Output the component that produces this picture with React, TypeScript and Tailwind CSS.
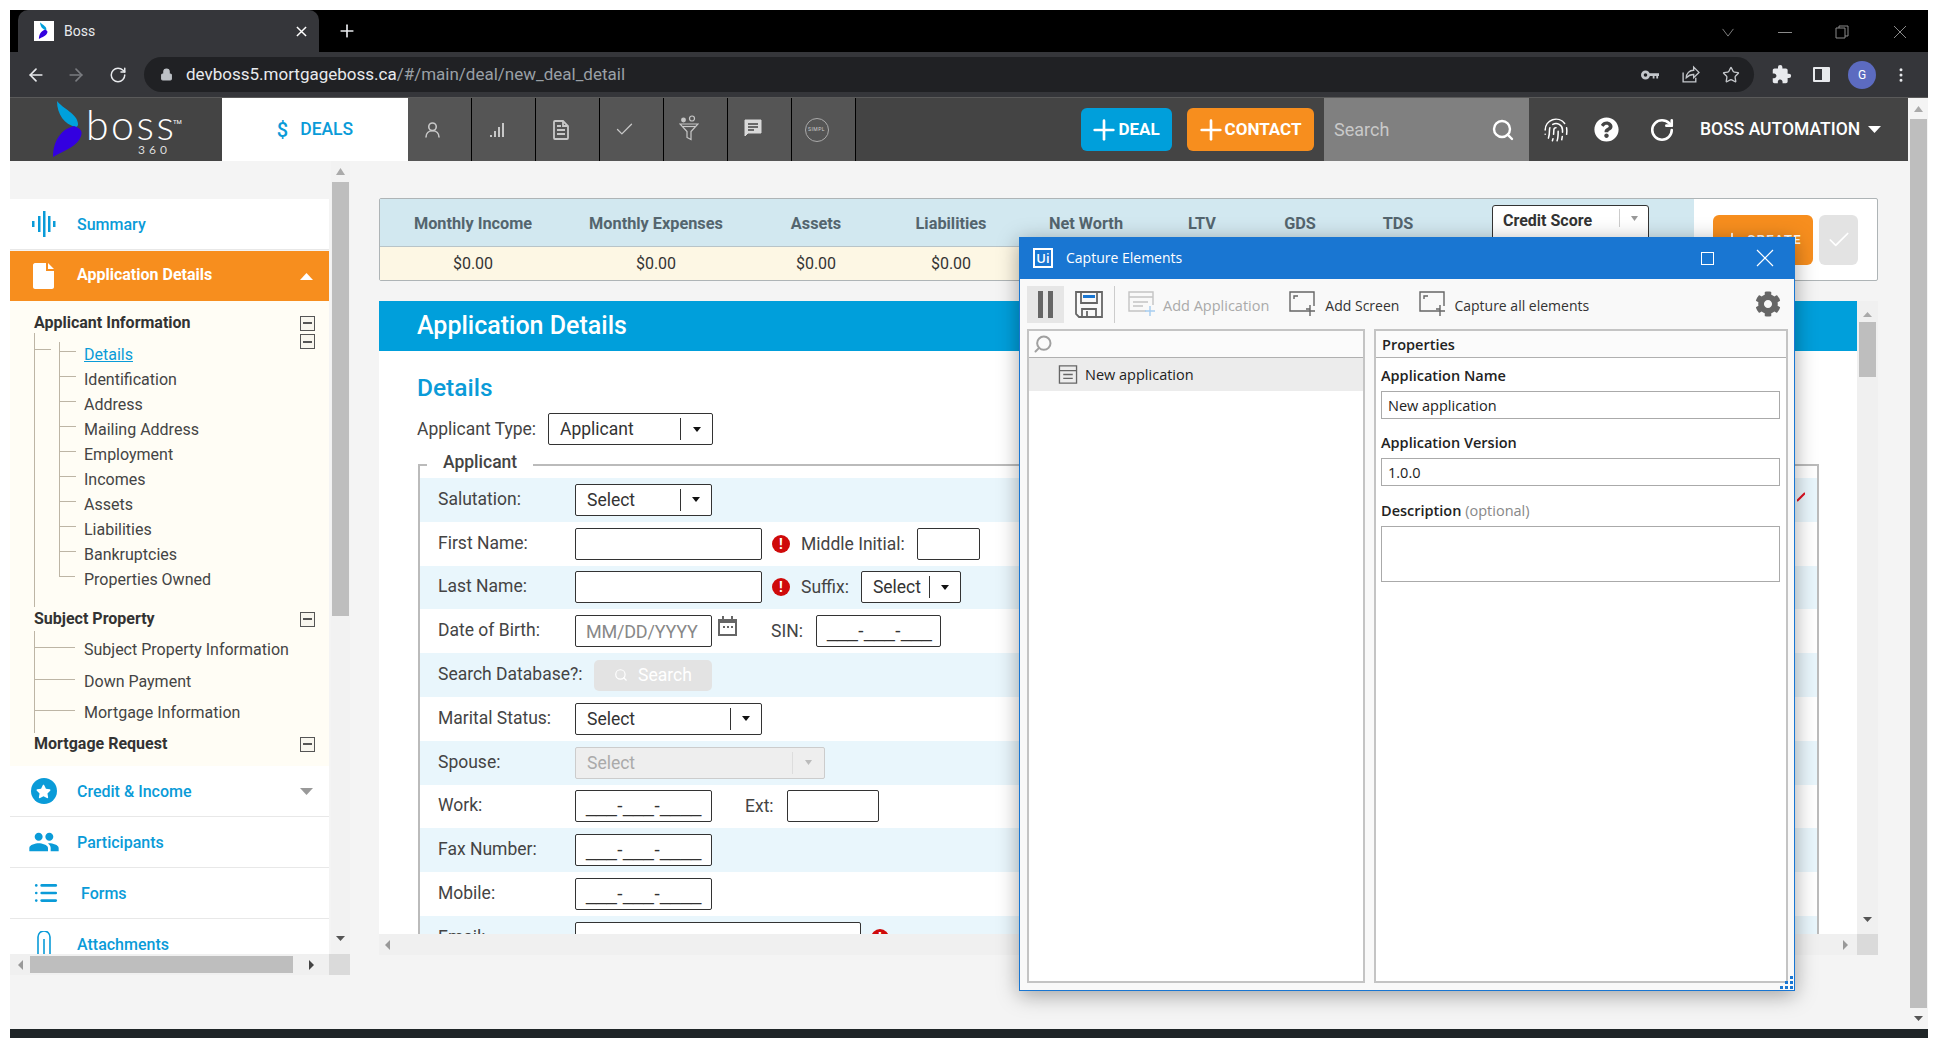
import {
  ArrowLeft,
  ArrowRight,
  Check,
  EllipsisVertical,
  Fingerprint,
  List,
  Lock,
  Plus,
  RotateCw,
  Search,
  Star,
} from 'lucide-react';
import { FaCog, FaQuestionCircle, FaStar } from 'react-icons/fa';
import { MdExtension, MdPeople } from 'react-icons/md';
import type { ReactNode } from 'react';

const STATS = [
  { label: 'Monthly Income', w: 'w-[186px]' },
  { label: 'Monthly Expenses', w: 'w-[180px]' },
  { label: 'Assets', w: 'w-[140px]' },
  { label: 'Liabilities', w: 'w-[130px]' },
  { label: 'Net Worth', w: 'w-[140px]' },
  { label: 'LTV', w: 'w-[92px]' },
  { label: 'GDS', w: 'w-[104px]' },
  { label: 'TDS', w: 'w-[92px]' },
];

const APPLICANT_ITEMS = [
  'Details',
  'Identification',
  'Address',
  'Mailing Address',
  'Employment',
  'Incomes',
  'Assets',
  'Liabilities',
  'Bankruptcies',
  'Properties Owned',
];

const Tri = ({ dir, className }: { dir: 'up' | 'down' | 'left' | 'right'; className: string }) => {
  const points = {
    up: '0,10 5,0 10,10',
    down: '0,0 10,0 5,10',
    left: '10,0 10,10 0,5',
    right: '0,0 0,10 10,5',
  }[dir];
  return (
    <svg viewBox="0 0 10 10" preserveAspectRatio="none" className={className}>
      <polygon points={points} fill="currentColor" />
    </svg>
  );
};

const Logo = () => (
  <div className="relative h-[63px] w-[212px] shrink-0">
    <svg viewBox="0 0 40 60" className="absolute left-[40px] top-[2px] h-[60px] w-[40px]">
      <path d="M7 1C12 8 28 14 28 24C28 27 26 27 25 27C15 24 7 15 7 1Z" fill="#00a0dc" />
      <path d="M24 26C30 28 33 31 31 36C28 46 15 50 3 57C3 45 8 30 24 26Z" fill="#3300e0" />
    </svg>
    <span className="absolute left-[76px] top-[8px] font-['Lato',sans-serif] text-[41px] font-light leading-[38px] tracking-[2.5px] text-white">
      boss
    </span>
    <span className="absolute left-[163px] top-[21px] text-[6px] leading-none text-white">TM</span>
    <span className="absolute left-[128px] top-[46px] font-['Lato',sans-serif] text-[12px] leading-none tracking-[4px] text-[#ddd]">
      360
    </span>
  </div>
);

const BrowserChrome = () => (
  <div className="flex flex-col font-['Roboto',sans-serif]">
    <div className="relative flex h-[42px] items-end bg-black pl-[8px]">
      <div className="flex h-[42px] w-[301px] items-center rounded-t-[10px] bg-[#35363a] pl-[16px] pr-[12px]">
        <div className="flex h-[20px] w-[20px] items-center justify-center bg-white">
          <svg viewBox="0 0 40 60" className="h-[18px] w-[12px]">
            <path d="M7 1C12 8 28 14 28 24C28 27 26 27 25 27C15 24 7 15 7 1Z" fill="#00a0dc" />
            <path d="M24 26C30 28 33 31 31 36C28 46 15 50 3 57C3 45 8 30 24 26Z" fill="#3300e0" />
          </svg>
        </div>
        <span className="ml-[10px] text-[14px] text-[#e8eaed]">Boss</span>
        <svg viewBox="0 0 12 12" className="ml-auto h-[11px] w-[11px]">
          <path d="M1 1L11 11M11 1L1 11" stroke="#fff" strokeWidth="1.6" />
        </svg>
      </div>
      <Plus className="ml-[18px] mb-[11px] h-[20px] w-[20px] text-[#e8eaed]" strokeWidth={2} />
      <div className="ml-auto mb-[13px] mr-[21px] flex items-center text-[#8a8a8a]">
        <svg viewBox="0 0 14 10" className="mr-[43px] h-[9px] w-[14px]">
          <path d="M1 1L7 9L13 1" fill="none" stroke="currentColor" />
        </svg>
        <div className="mr-[43px] h-px w-[14px] bg-current" />
        <svg viewBox="0 0 14 14" className="mr-[44px] h-[14px] w-[14px]">
          <path d="M1 3H10V13H1ZM4 3V1H13V11H10" fill="none" stroke="currentColor" />
        </svg>
        <svg viewBox="0 0 14 14" className="h-[14px] w-[14px]">
          <path d="M1 1L13 13M13 1L1 13" fill="none" stroke="currentColor" />
        </svg>
      </div>
    </div>
    <div className="flex h-[46px] items-center border-b border-[#5a5a5a] bg-[#35363a]">
      <ArrowLeft className="ml-[16px] h-[20px] w-[20px] text-[#e8eaed]" />
      <ArrowRight className="ml-[20px] h-[20px] w-[20px] text-[#7a7c80]" />
      <RotateCw className="ml-[23px] h-[18px] w-[18px] text-[#e8eaed]" />
      <div className="ml-[17px] flex h-[35px] w-[1610px] items-center rounded-full bg-[#202124] pl-[16px] pr-[14px]">
        <Lock className="h-[13px] w-[13px] text-[#bdc1c6]" fill="#bdc1c6" />
        <span className="ml-[13px] text-[17px] text-[#e8eaed]">
          devboss5.mortgageboss.ca<span className="text-[#9aa0a6]">/#/main/deal/new_deal_detail</span>
        </span>
        <svg viewBox="0 0 20 12" className="ml-auto h-[12px] w-[18px]" fill="#c4c7cb">
          <path fillRule="evenodd" d="M5 1A5 5 0 1 1 5 11A5 5 0 1 1 5 1ZM5 4A2 2 0 1 0 5 8A2 2 0 1 0 5 4Z" />
          <path d="M9 4H20V7H19V10H17V7H15V10H13V7H9Z" />
        </svg>
        <svg viewBox="0 0 18 18" className="ml-[22px] h-[19px] w-[19px]" fill="none" stroke="#c4c7cb" strokeWidth="1.3">
          <path d="M2 7V16H14V12" />
          <path d="M5 12C5 8 8 5 12 5V2L17 7L12 12V9C9 9 7 10 5 12Z" />
        </svg>
        <Star className="ml-[22px] h-[18px] w-[18px] text-[#c4c7cb]" strokeWidth={1.8} />
      </div>
      <MdExtension className="ml-[17px] h-[21px] w-[21px] text-[#e8eaed]" />
      <div className="ml-[21px] flex h-[15px] w-[17px] justify-end rounded-[1px] border-2 border-[#e8eaed]">
        <div className="h-full w-[6px] bg-[#e8eaed]" />
      </div>
      <div className="ml-[18px] flex h-[28px] w-[28px] items-center justify-center rounded-full bg-[#5c6bc0] text-[12px] text-white">
        G
      </div>
      <EllipsisVertical className="ml-[16px] h-[18px] w-[18px] text-[#e8eaed]" />
    </div>
  </div>
);

const IconCell = ({ children }: { children: ReactNode }) => (
  <div className="flex h-full w-[64px] items-center justify-center border-r border-black bg-[#555] pr-[14px] text-[#c8c8c8]">
    {children}
  </div>
);

const AppHeader = () => (
  <div className="flex h-[63px] items-stretch bg-[#444] font-['Roboto',sans-serif]">
    <Logo />
    <div className="flex w-[186px] items-center justify-center gap-[12px] bg-white text-[17.5px] font-medium text-[#0a9bd8]">
      <span className="text-[20px]">$</span> DEALS
    </div>
    <IconCell>
      <svg viewBox="0 0 16 18" className="h-[18px] w-[15px]" fill="none" stroke="currentColor" strokeWidth="1.7">
        <circle cx="8" cy="5.5" r="4" />
        <path d="M1 17C1 12.5 4 9.8 8 9.8C12 9.8 15 12.5 15 17" />
      </svg>
    </IconCell>
    <IconCell>
      <svg viewBox="0 0 16 16" className="h-[16px] w-[16px]" fill="currentColor">
        <rect x="1" y="13" width="2" height="2" />
        <rect x="5" y="9" width="2" height="6" />
        <rect x="9" y="5" width="2" height="10" />
        <rect x="13" y="1" width="2" height="14" />
      </svg>
    </IconCell>
    <IconCell>
      <svg viewBox="0 0 16 20" className="h-[20px] w-[16px]" fill="none" stroke="currentColor" strokeWidth="1.8">
        <path d="M2 1H10L15 6V18C15 18.6 14.6 19 14 19H2C1.4 19 1 18.6 1 18V2C1 1.4 1.4 1 2 1Z" />
        <path d="M4 6H8M10 2V6H14M4 10H12M4 14H12" />
      </svg>
    </IconCell>
    <IconCell>
      <Check className="h-[21px] w-[21px]" strokeWidth={1.5} />
    </IconCell>
    <IconCell>
      <svg viewBox="0 0 20 26" className="mb-[3px] h-[26px] w-[20px]" fill="none" stroke="currentColor" strokeWidth="1.2">
        <circle cx="4.5" cy="5" r="1.8" fill="currentColor" />
        <circle cx="13" cy="3.5" r="2.5" />
        <path d="M1 9H19L12 16.5V24.5L8 22.5V16.5Z" />
        <path d="M4 11.5H16" />
      </svg>
    </IconCell>
    <IconCell>
      <svg viewBox="0 0 18 18" className="mb-[3px] h-[18px] w-[18px]">
        <path d="M1 1H17V14H4L1 17Z" fill="#d9d9d9" stroke="#d9d9d9" />
        <path d="M4 5H14M4 8H14M4 11H10" stroke="#444" strokeWidth="1.5" />
      </svg>
    </IconCell>
    <IconCell>
      <div className="flex h-[24px] w-[24px] shrink-0 items-center justify-center rounded-full border border-[#aaa] text-[5px] tracking-[0.5px] text-[#ccc]">
        SIMPL
      </div>
    </IconCell>
    <div className="flex flex-1 items-center justify-end">
      <button className="flex h-[43px] w-[91px] items-center justify-center gap-[3px] rounded-[6px] bg-[#009fdb] text-[17px] font-bold text-white">
        <Plus className="-mx-[5px] h-[32px] w-[32px]" strokeWidth={2} />
        DEAL
      </button>
      <button className="ml-[15px] flex h-[43px] w-[127px] items-center justify-center gap-[3px] rounded-[6px] bg-[#f78e1e] text-[17px] font-bold text-white">
        <Plus className="-mx-[5px] h-[32px] w-[32px]" strokeWidth={2} />
        CONTACT
      </button>
    </div>
    <div className="ml-[10px] flex w-[205px] items-center bg-[#808080] pl-[10px] pr-[14px] text-[18px] text-[#c9c9c9]">
      Search
      <Search className="ml-auto h-[24px] w-[24px] text-white" strokeWidth={2.4} />
    </div>
    <div className="flex w-[379px] items-center pl-[14px] text-white">
      <Fingerprint className="h-[26px] w-[26px]" strokeWidth={1.4} />
      <FaQuestionCircle className="ml-[25px] h-[25px] w-[25px]" />
      <RotateCw className="ml-[30px] h-[26px] w-[26px]" strokeWidth={2.4} />
      <span className="ml-[25px] text-[17.5px] font-medium">BOSS AUTOMATION</span>
      <Tri dir="down" className="ml-[8px] h-[7px] w-[13px] text-white" />
    </div>
  </div>
);

const MinusBox = () => (
  <div className="flex h-[15px] w-[15px] shrink-0 items-center justify-center border border-[#555] bg-[#f8f6ee]">
    <div className="h-[2px] w-[9px] bg-[#555]" />
  </div>
);

const NavRow = ({ icon, label, chevron, indent }: { icon: ReactNode; label: string; chevron?: boolean; indent?: boolean }) => (
  <div className="flex h-[51px] shrink-0 items-center border-b border-[#e8e8e8] bg-white text-[16px] font-medium text-[#0a9bd8]">
    <div className={indent ? 'flex w-[71px] justify-center' : 'flex w-[67px] justify-center'}>{icon}</div>
    <span className="pt-[1px]">{label}</span>
    {chevron && <Tri dir="down" className="ml-auto mr-[16px] h-[7px] w-[13px] text-[#999]" />}
  </div>
);

const Sidebar = () => (
  <div className="flex w-[340px] shrink-0 flex-col font-['Roboto',sans-serif]">
    <div className="flex h-[793px]">
      <div className="flex w-[319px] shrink-0 flex-col overflow-hidden pt-[38px]">
        <NavRow
          label="Summary"
          icon={
            <svg viewBox="0 0 24 26" className="h-[26px] w-[24px]" fill="#0a9bd8">
              <rect x="0" y="10" width="2.5" height="6" />
              <rect x="6" y="5" width="2.5" height="16" />
              <rect x="11" y="0" width="2.5" height="26" />
              <rect x="16" y="5" width="2.5" height="16" />
              <rect x="21" y="10" width="2.5" height="6" />
            </svg>
          }
        />
        <div className="mt-px flex h-[50px] shrink-0 items-center bg-[#f78e1e] text-[16px] font-bold text-white">
          <div className="flex w-[67px] justify-center">
            <svg viewBox="0 0 21 26" className="h-[26px] w-[21px]">
              <path d="M2 0H13V8H21V24C21 25 20 26 19 26H2C1 26 0 25 0 24V2C0 1 1 0 2 0ZM15 0L21 6H15Z" fill="#fff" />
            </svg>
          </div>
          <span className="-translate-y-[1px]">Application Details</span>
          <Tri dir="up" className="ml-auto mr-[16px] h-[7px] w-[13px] text-white" />
        </div>
        <div className="h-[465px] shrink-0 bg-[#fffdf5] pl-[24px] pr-[14px] pt-[12px] text-[16px] text-[#444]">
          <div className="flex h-[20px] items-center justify-between text-[#333]">
            <span className="font-bold">Applicant Information</span>
            <MinusBox />
          </div>
          <div className="flex h-[274px]">
            <div className="w-[25px] shrink-0 border-l border-[#bdb5a5]">
              <div className="mt-[16px] w-[16px] border-b border-[#bdb5a5]" />
            </div>
            <ul className="flex-1 pt-[9px]">
              {APPLICANT_ITEMS.map((item, i) => {
                const last = i === APPLICANT_ITEMS.length - 1;
                return (
                  <li key={item} className={last ? 'flex h-[25px]' : 'flex h-[25px] border-l border-[#bdb5a5]'}>
                    <div className={last ? 'h-[10px] w-[16px] border-b border-l border-[#bdb5a5]' : 'h-[10px] w-[16px] border-b border-[#bdb5a5]'} />
                    <span
                      className={
                        i === 0
                          ? 'ml-[8px] leading-[25px] text-[#0a9bd8] underline'
                          : last
                            ? 'ml-[9px] leading-[25px]'
                            : 'ml-[8px] leading-[25px]'
                      }
                    >
                      {item}
                    </span>
                  </li>
                );
              })}
            </ul>
            <div className="mt-[1px] shrink-0">
              <MinusBox />
            </div>
          </div>
          <div className="flex h-[24px] items-center justify-between text-[#333]">
            <span className="font-bold">Subject Property</span>
            <MinusBox />
          </div>
          <div className="h-[102px] border-l border-[#bdb5a5]">
            {['Subject Property Information', 'Down Payment', 'Mortgage Information'].map((item) => (
              <div key={item} className="flex h-[31.5px]">
                <div className="h-[17px] w-[40px] border-b border-[#bdb5a5]" />
                <span className="ml-[9px] leading-[38px]">{item}</span>
              </div>
            ))}
          </div>
          <div className="flex h-[22px] items-center justify-between text-[#333]">
            <span className="font-bold">Mortgage Request</span>
            <MinusBox />
          </div>
        </div>
        <NavRow
          label="Credit & Income"
          chevron
          icon={
            <div className="flex h-[26px] w-[26px] items-center justify-center rounded-full bg-[#0a9bd8]">
              <FaStar className="h-[15px] w-[15px] text-white" />
            </div>
          }
        />
        <NavRow label="Participants" icon={<MdPeople className="h-[32px] w-[32px] text-[#0a9bd8]" />} />
        <NavRow label="Forms" indent icon={<List className="h-[26px] w-[26px] text-[#0a9bd8]" strokeWidth={2.4} />} />
        <NavRow
          label="Attachments"
          icon={
            <svg viewBox="0 0 14 26" className="h-[26px] w-[14px]" fill="none" stroke="#0a9bd8" strokeWidth="1.6">
              <path d="M1 26V6A6 6 0 0 1 13 6V26" />
              <path d="M7 8V26" />
            </svg>
          }
        />
      </div>
      <div className="ml-[2px] flex w-[19px] shrink-0 flex-col items-center bg-[#f2f2f2]">
        <div className="flex h-[21px] shrink-0 items-center justify-center">
          <Tri dir="up" className="h-[7px] w-[9px] text-[#aaa]" />
        </div>
        <div className="h-[434px] w-[17px] shrink-0 bg-[#bebebe]" />
        <div className="mt-auto flex h-[18px] shrink-0 items-start justify-center">
          <Tri dir="down" className="h-[5px] w-[9px] text-[#555]" />
        </div>
      </div>
    </div>
    <div className="flex h-[21px] items-center bg-[#f0f0f0]">
      <div className="flex h-full w-[20px] items-center justify-center">
        <Tri dir="left" className="h-[10px] w-[5px] text-[#999]" />
      </div>
      <div className="h-[17px] w-[263px] bg-[#bebebe]" />
      <div className="flex h-full w-[36px] items-center justify-center">
        <Tri dir="right" className="h-[10px] w-[5px] text-[#444]" />
      </div>
      <div className="h-full w-[21px] bg-[#dadada]" />
    </div>
  </div>
);

const StatsCard = () => (
  <div className="flex h-[83px] rounded-[2px] border border-[#aeb4b6] bg-white font-['Roboto',sans-serif]">
    <div className="flex w-[1314px] flex-col">
      <div className="flex h-[48px] items-center border-b border-[#b8c4c8] bg-[#d2e8f0] pt-[3px] text-[16.3px] font-bold text-[#54656e]">
        {STATS.map((s) => (
          <div key={s.label} className={`${s.w} text-center`}>
            {s.label}
          </div>
        ))}
        <div className="ml-[48px] flex h-[40px] w-[157px] translate-y-[1px] items-start rounded-[3px] border border-[#333] bg-white pl-[10px] pt-[3px] text-[16px] text-[#333]">
          Credit Score
          <div className="ml-auto mr-[10px] flex h-[18px] items-center border-l border-[#ccc] pl-[11px]">
            <Tri dir="down" className="h-[5px] w-[7px] text-[#999]" />
          </div>
        </div>
      </div>
      <div className="flex flex-1 items-center bg-[#fdf7e4] text-[16px] text-[#333]">
        {STATS.slice(0, 4).map((s) => (
          <div key={s.label} className={`${s.w} text-center`}>
            $0.00
          </div>
        ))}
      </div>
    </div>
    <div className="flex flex-1 items-center pl-[19px]">
      <div className="flex h-[50px] w-[100px] items-start rounded-[6px] bg-[#f78e1e] pl-[8px] pt-[15px] text-[13px] font-bold tracking-[1.2px] text-white">
        <Plus className="h-[22px] w-[22px] -translate-y-[1px]" strokeWidth={2} />
        <span className="ml-[4px] leading-[20px]">CREATE</span>
      </div>
      <div className="ml-[6px] flex h-[50px] w-[39px] items-center justify-center rounded-[6px] bg-[#e3e3e3]">
        <Check className="h-[26px] w-[26px] text-white" strokeWidth={1.6} />
      </div>
    </div>
  </div>
);

const Input = ({ className, children }: { className: string; children?: ReactNode }) => (
  <div className={`flex h-[32px] shrink-0 items-center rounded-[2px] border border-[#333] bg-white px-[10px] text-[#333] ${className}`}>
    {children}
  </div>
);

// Liberation has the wider underscores the masked inputs show
const Mask = ({ value }: { value: string }) => (
  <span className="whitespace-nowrap font-['Liberation_Sans',sans-serif] text-[18.5px] leading-none text-[#333]">{value}</span>
);

const SelectBox = ({ label, className, split }: { label: string; className: string; split: string }) => (
  <div className={`flex h-[32px] shrink-0 items-center rounded-[2px] border border-[#333] bg-white pl-[11px] text-[17.5px] text-[#333] ${className}`}>
    {label}
    <div className={`ml-auto flex h-[22px] items-center justify-center border-l border-[#333] ${split}`}>
      <Tri dir="down" className="h-[5px] w-[8px] text-[#111]" />
    </div>
  </div>
);

const ErrorDot = () => (
  <div className="flex h-[18px] w-[18px] shrink-0 items-center justify-center rounded-full bg-[#cf0a0a] text-[14px] font-bold leading-none text-white">
    !
  </div>
);

const Row = ({ label, shaded, children }: { label: string; shaded?: boolean; children?: ReactNode }) => (
  <div className={shaded ? 'flex h-[43.8px] shrink-0 items-center bg-[#e9f6fc] pl-[18px] text-[17.5px] text-[#444]' : 'flex h-[43.8px] shrink-0 items-center bg-white pl-[18px] text-[17.5px] text-[#444]'}>
    <span className="w-[137px] shrink-0 -translate-y-[1px] whitespace-nowrap">{label}</span>
    {children}
  </div>
);

const MainPanel = () => (
  <div className="mt-[20px] flex h-[654px] flex-col font-['Roboto',sans-serif]">
    <div className="flex h-[633px]">
      <div className="w-[1478px] overflow-hidden bg-white">
        <div className="flex h-[50px] items-center bg-[#009fdb] pl-[38px] text-[25px] font-medium text-white">
          Application Details
        </div>
        <div className="pl-[38px] pt-[23px] text-[#444]">
          <h2 className="text-[24.5px] font-medium leading-[28px] text-[#0a9bd8]">Details</h2>
          <div className="mt-[11px] flex items-center text-[17.5px]">
            <span className="w-[131px] shrink-0 whitespace-nowrap">Applicant Type:</span>
            <SelectBox label="Applicant" className="w-[165px]" split="w-[32px]" />
          </div>
          <div className="relative ml-px mt-[19px] w-[1401px] border-2 border-b-0 border-[#bbb]">
            <span className="absolute -top-[15px] left-[7px] bg-white px-[16px] text-[17.5px] font-medium leading-[22px] text-[#444]">
              Applicant
            </span>
            <div className="flex flex-col pt-[12px]">
              <Row label="Salutation:" shaded>
                <SelectBox label="Select" className="w-[137px]" split="w-[31px]" />
                <svg viewBox="0 0 10 10" className="ml-auto mr-[12px] h-[10px] w-[8px] -translate-y-[3px]">
                  <path d="M0 10L10 0" stroke="#e01020" strokeWidth="2.5" />
                </svg>
              </Row>
              <Row label="First Name:">
                <Input className="w-[187px]" />
                <div className="ml-[10px] flex items-center gap-[11px]">
                  <ErrorDot />
                  <span>Middle Initial:</span>
                </div>
                <Input className="ml-[12px] w-[63px]" />
              </Row>
              <Row label="Last Name:" shaded>
                <Input className="w-[187px]" />
                <div className="ml-[10px] flex items-center gap-[11px]">
                  <ErrorDot />
                  <span>Suffix:</span>
                </div>
                <SelectBox label="Select" className="ml-[12px] w-[100px]" split="w-[31px]" />
              </Row>
              <Row label="Date of Birth:">
                <Input className="w-[137px]">
                  <span className="whitespace-nowrap text-[18px] tracking-[-0.2px] text-[#888]">MM/DD/YYYY</span>
                </Input>
                <svg viewBox="0 0 19 20" className="mb-[10px] ml-[6px] h-[20px] w-[19px] shrink-0">
                  <path d="M4 0H6V3H13V0H15V3H19V20H0V3H4ZM2 7V18H17V7Z" fill="#666" />
                  <path d="M5 10H7V12H5ZM9 10H11V12H9ZM13 10H15V12H13Z" fill="#666" />
                </svg>
                <span className="ml-[34px]">SIN:</span>
                <Input className="ml-[13px] w-[125px]">
                  <Mask value="___-___-___" />
                </Input>
              </Row>
              <Row label="Search Database?:" shaded>
                <div className="ml-[19px] flex h-[31px] w-[118px] items-center justify-center gap-[10px] rounded-[5px] bg-[#e3e3e3] text-white">
                  <Search className="h-[14px] w-[14px]" />
                  Search
                </div>
              </Row>
              <Row label="Marital Status:">
                <SelectBox label="Select" className="w-[187px]" split="w-[31px]" />
              </Row>
              <Row label="Spouse:" shaded>
                <div className="flex h-[32px] w-[250px] items-center rounded-[2px] border border-[#ccc] bg-[#eee] pl-[11px] text-[#aaa]">
                  Select
                  <div className="ml-auto flex h-[22px] w-[32px] items-center justify-center border-l border-[#ddd]">
                    <Tri dir="down" className="h-[5px] w-[7px] text-[#bbb]" />
                  </div>
                </div>
              </Row>
              <Row label="Work:">
                <Input className="w-[137px]">
                  <Mask value="___-___-____" />
                </Input>
                <span className="ml-[33px]">Ext:</span>
                <Input className="ml-[13px] w-[92px]" />
              </Row>
              <Row label="Fax Number:" shaded>
                <Input className="w-[137px]">
                  <Mask value="___-___-____" />
                </Input>
              </Row>
              <Row label="Mobile:">
                <Input className="w-[137px]">
                  <Mask value="___-___-____" />
                </Input>
              </Row>
              <Row label="Email:" shaded>
                <Input className="w-[286px]" />
                <div className="ml-[10px]">
                  <ErrorDot />
                </div>
              </Row>
            </div>
          </div>
        </div>
      </div>
      <div className="flex w-[21px] flex-col items-center bg-[#f0f0f0]">
        <div className="flex h-[21px] shrink-0 items-end justify-center pb-[5px]">
          <Tri dir="up" className="h-[5px] w-[9px] text-[#aaa]" />
        </div>
        <div className="h-[55px] w-[17px] shrink-0 bg-[#bebebe]" />
        <div className="mt-auto flex h-[17px] shrink-0 items-start justify-center">
          <Tri dir="down" className="h-[5px] w-[9px] text-[#555]" />
        </div>
      </div>
    </div>
    <div className="flex h-[21px] items-center bg-[#f0f0f0]">
      <div className="flex h-full w-[16px] items-center justify-center">
        <Tri dir="left" className="h-[10px] w-[5px] text-[#999]" />
      </div>
      <div className="ml-auto flex h-full w-[24px] items-center justify-center">
        <Tri dir="right" className="h-[10px] w-[5px] text-[#999]" />
      </div>
      <div className="h-full w-[21px] bg-[#dadada]" />
    </div>
  </div>
);

const ScreenIcon = () => (
  <svg viewBox="0 0 27 26" className="h-[26px] w-[27px]" fill="none" stroke="#666" strokeWidth="1.4">
    <path d="M16 20H1V1H25V15" />
    <path d="M5 8V5H9" />
    <path d="M17 18H21M21 14V25M16 20H26" />
  </svg>
);

const CaptureDialog = () => (
  <div className="absolute left-[1019px] top-[237px] flex h-[754px] w-[776px] flex-col border border-t-0 border-[#1976d2] bg-[#f9f9f9] font-['Open_Sans',sans-serif] text-[14.5px] shadow-[0_4px_20px_rgba(0,0,0,0.35)]">
    <div className="-mx-px flex h-[42px] shrink-0 items-center bg-[#1976d2] pl-[14px] text-white">
      <div className="flex h-[20px] w-[20px] items-center justify-center border-2 border-white text-[13px] font-semibold leading-none">
        Ui
      </div>
      <span className="ml-[13px] -translate-y-[1px] text-[14px]">Capture Elements</span>
      <div className="ml-auto mr-[42px] h-[13px] w-[13px] border border-white" />
      <svg viewBox="0 0 18 18" className="mr-[21px] h-[18px] w-[18px]">
        <path d="M1 1L17 17M17 1L1 17" stroke="#fff" strokeWidth="1.2" />
      </svg>
    </div>
    <div className="flex h-[50px] shrink-0 items-center pl-[7px] pr-[13px]">
      <div className="flex h-[37px] w-[37px] items-center justify-center gap-[5px] bg-[#e6e6e6]">
        <div className="h-[27px] w-[5px] bg-[#666]" />
        <div className="h-[27px] w-[5px] bg-[#666]" />
      </div>
      <svg viewBox="0 0 28 27" className="ml-[11px] h-[27px] w-[28px]" fill="none" stroke="#666" strokeWidth="1.8">
        <path d="M1 1H27V26H4L1 23Z" />
        <path d="M6 1V12H22V1" />
        <rect x="8" y="4" width="12" height="3" fill="#1976d2" stroke="none" />
        <path d="M7 26V18H21V26M12 20V26" />
      </svg>
      <div className="ml-[11px] h-[37px] w-px bg-[#ccc]" />
      <svg viewBox="0 0 28 26" className="ml-[13px] h-[26px] w-[28px]" fill="none" stroke="#c4c4c4" strokeWidth="1.4">
        <path d="M18 20H1V1H25V14M1 6H25M5 11H20M5 15H15" />
        <path d="M22 15V25M17 20H27" stroke="#a6cdf0" />
      </svg>
      <span className="ml-[7px] mt-[3px] text-[#aaa]">Add Application</span>
      <div className="ml-[20px]">
        <ScreenIcon />
      </div>
      <span className="ml-[9px] mt-[3px] text-[14px] text-[#333]">Add Screen</span>
      <div className="ml-[20px]">
        <ScreenIcon />
      </div>
      <span className="ml-[8px] mt-[3px] text-[14px] text-[#333]">Capture all elements</span>
      <FaCog className="ml-auto h-[26px] w-[26px] text-[#666]" />
    </div>
    <div className="relative flex flex-1 gap-[9px] pb-[7px] pl-[7px] pr-[6px]">
      <div className="flex w-[338px] flex-col border-2 border-[#c4c4c4] bg-white">
        <div className="flex h-[27px] shrink-0 items-center border-b border-[#b0b0b0] bg-[#fbfbfb] pl-[4px]">
          <Search className="h-[20px] w-[20px] -scale-x-100 text-[#a0a0a0]" strokeWidth={2.4} />
        </div>
        <div className="flex h-[33px] shrink-0 items-center bg-[#ececec] pl-[29px] text-[#222]">
          <svg viewBox="0 0 20 20" className="h-[19px] w-[20px]" fill="none" stroke="#666" strokeWidth="1.4">
            <path d="M1 1H19V19H1ZM1 6H19M5 10H15M5 14H15" />
          </svg>
          <span className="ml-[7px]">New application</span>
        </div>
      </div>
      <div className="flex flex-1 flex-col border-2 border-[#c4c4c4] bg-white">
        <div className="flex h-[27px] shrink-0 items-center border-b border-[#b0b0b0] bg-[#fbfbfb] pl-[6px] pt-[2px] font-semibold text-[#222]">
          Properties
        </div>
        <div className="flex flex-col pl-[5px] pr-[6px] pt-[6px] text-[#222]">
          <span className="font-semibold leading-[24px]">Application Name</span>
          <div className="mt-[3px] flex h-[28px] items-center border border-[#aaa] pl-[6px] pt-[2px]">New application</div>
          <span className="mt-[12px] font-semibold leading-[24px]">Application Version</span>
          <div className="mt-[3px] flex h-[28px] items-center border border-[#aaa] pl-[6px] pt-[2px]">1.0.0</div>
          <span className="mt-[13px] leading-[24px]">
            <span className="font-semibold">Description</span> <span className="text-[#888]">(optional)</span>
          </span>
          <div className="mt-[3px] h-[56px] border border-[#aaa]" />
        </div>
      </div>
      <svg viewBox="0 0 13 13" className="absolute bottom-[1px] right-[1px] h-[13px] w-[13px]" fill="#1976d2">
        <rect x="10" y="0" width="3" height="3" />
        <rect x="5" y="5" width="3" height="3" />
        <rect x="10" y="5" width="3" height="3" />
        <rect x="0" y="10" width="3" height="3" />
        <rect x="5" y="10" width="3" height="3" />
        <rect x="10" y="10" width="3" height="3" />
      </svg>
    </div>
  </div>
);

const App = () => (
  <div className="relative h-[1038px] w-[1938px] overflow-hidden bg-white pl-[10px] pr-[10px] pt-[10px]">
    <BrowserChrome />
    <div className="flex h-[940px]">
      <div className="flex w-[1898px] shrink-0 flex-col bg-[#f4f4f4]">
        <AppHeader />
        <div className="flex flex-1">
          <Sidebar />
          <div className="ml-[29px] w-[1499px] pt-[37px]">
            <StatsCard />
            <MainPanel />
          </div>
        </div>
        <div className="-mr-[20px] h-[9px] shrink-0 bg-[#1f2527]" />
      </div>
      <div className="flex h-[931px] w-[20px] shrink-0 flex-col items-center bg-[#f4f4f4]">
        <div className="flex h-[21px] shrink-0 items-center justify-center">
          <Tri dir="up" className="h-[6px] w-[9px] text-[#aaa]" />
        </div>
        <div className="h-[889px] w-[17px] shrink-0 bg-[#bebebe]" />
        <div className="flex flex-1 items-center justify-center">
          <Tri dir="down" className="h-[5px] w-[9px] text-[#555]" />
        </div>
      </div>
    </div>
    <CaptureDialog />
  </div>
);

export default App;
